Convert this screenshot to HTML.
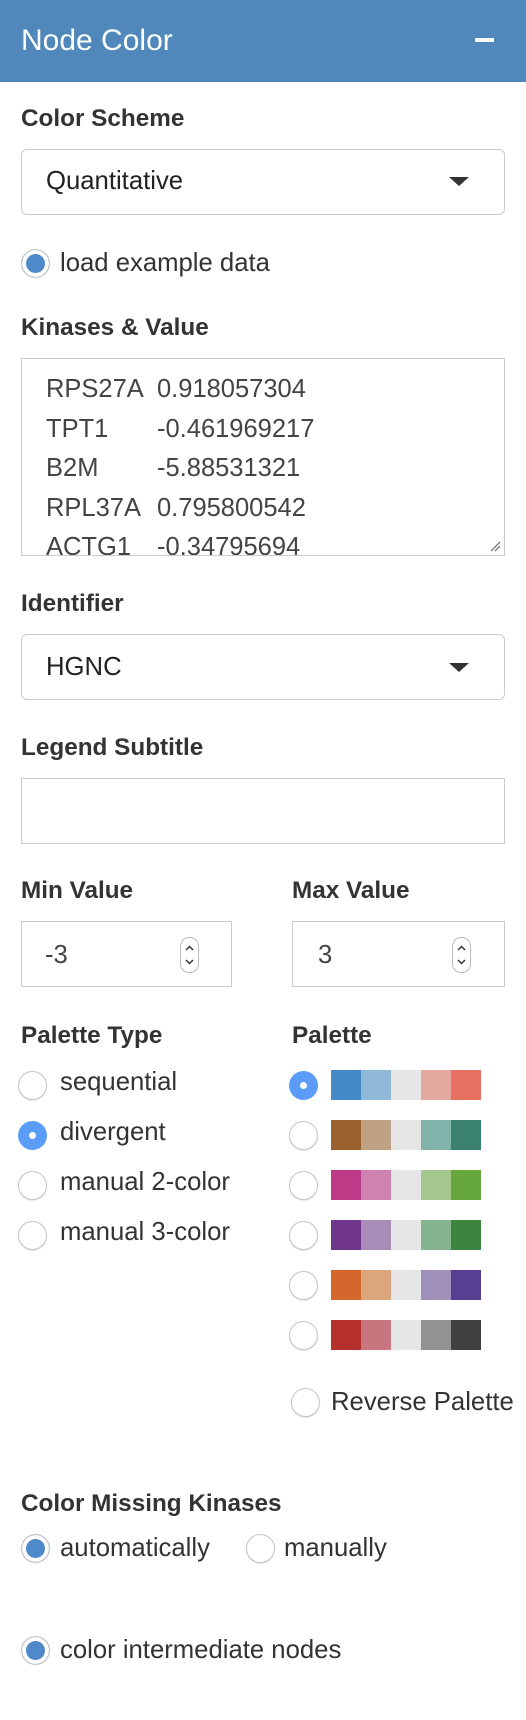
<!DOCTYPE html>
<html><head><meta charset="utf-8"><style>
*{box-sizing:border-box;margin:0;padding:0}
body{width:526px;height:1720px;background:#fff;font-family:"Liberation Sans",sans-serif;color:#333;position:relative;overflow:hidden}
.a{position:absolute;white-space:nowrap}
.hdr{position:absolute;left:0;top:0;width:526px;height:82px;background:#5088bb}
.lbl{position:absolute;font-weight:bold;font-size:24.3px;color:#333;line-height:30px;height:30px;white-space:nowrap}
.t{position:absolute;font-size:25.7px;color:#333;line-height:30px;height:30px;white-space:nowrap}
.box{position:absolute;border:1.5px solid #ccc;background:#fff}
.sel{border-radius:6px}
.arrow{position:absolute;width:0;height:0;border-left:10px solid transparent;border-right:10px solid transparent;border-top:9px solid #333}
.r{position:absolute;width:29px;height:29px;border-radius:50%;border:1.5px solid #c4c4c4;background:#fff;box-shadow:0 1px 1px rgba(0,0,0,.1)}
.rc{background:#5089c9;box-shadow:inset 0 0 0 4px #fff;border:1.5px solid #c4c4c4}
.rb{background:#5a9cf8;border:none;box-shadow:none}
.rb::after{content:"";position:absolute;left:11px;top:11px;width:7px;height:7px;border-radius:50%;background:#fff}
.sw{position:absolute;height:30px;width:150px;display:flex}
.sw span{flex:1}
.spin{position:absolute;width:19px;height:36px;border:1px solid #bbb;border-radius:9px;background:#fff}
</style></head><body>
<div class="hdr"></div>
<div class="a" style="left:21px;top:24px;font-size:30px;color:#fff;line-height:34px">Node Color</div>
<div class="a" style="left:475px;top:38px;width:19px;height:4px;background:#fff"></div>

<div class="lbl" style="left:21px;top:104px">Color Scheme</div>
<div class="box sel" style="left:21px;top:149px;width:484px;height:66px"></div>
<div class="t" style="left:46px;top:166px;color:#222">Quantitative</div>
<div class="arrow" style="left:449px;top:177px"></div>

<div class="r rc" style="left:21px;top:249px"></div>
<div class="t" style="left:60px;top:248px">load example data</div>

<div class="lbl" style="left:21px;top:313px">Kinases &amp; Value</div>
<div class="box" style="left:21px;top:358px;width:484px;height:198px;overflow:hidden">
<div style="position:absolute;left:24px;top:11px;font-size:25.5px;line-height:39.5px;color:#444;white-space:pre">RPS27A
TPT1
B2M
RPL37A
ACTG1</div>
<div style="position:absolute;left:135px;top:11px;font-size:25.5px;line-height:39.5px;color:#444;white-space:pre">0.918057304
-0.461969217
-5.88531321
0.795800542
-0.34795694</div>
<svg style="position:absolute;right:3px;bottom:3px" width="12" height="12"><path d="M2 11L11 2M6 11L11 6" stroke="#666" stroke-width="1.2"/></svg>
</div>

<div class="lbl" style="left:21px;top:589px">Identifier</div>
<div class="box sel" style="left:21px;top:634px;width:484px;height:66px"></div>
<div class="t" style="left:46px;top:652px;color:#222">HGNC</div>
<div class="arrow" style="left:449px;top:663px"></div>

<div class="lbl" style="left:21px;top:733px">Legend Subtitle</div>
<div class="box" style="left:21px;top:778px;width:484px;height:66px"></div>

<div class="lbl" style="left:21px;top:876px">Min Value</div>
<div class="lbl" style="left:292px;top:876px">Max Value</div>
<div class="box" style="left:21px;top:921px;width:211px;height:66px"></div>
<div class="box" style="left:292px;top:921px;width:213px;height:66px"></div>
<div class="t" style="left:45px;top:940px;color:#444">-3</div>
<div class="t" style="left:318px;top:940px;color:#444">3</div>
<div class="spin" style="left:180px;top:937px"></div>
<div class="spin" style="left:452px;top:937px"></div>
<svg class="a" style="left:180px;top:937px" width="19" height="36"><path d="M6 13L9.5 9.5L13 13M6 23L9.5 26.5L13 23" stroke="#333" stroke-width="1.5" fill="none"/></svg>
<svg class="a" style="left:452px;top:937px" width="19" height="36"><path d="M6 13L9.5 9.5L13 13M6 23L9.5 26.5L13 23" stroke="#333" stroke-width="1.5" fill="none"/></svg>

<div class="lbl" style="left:21px;top:1021px">Palette Type</div>
<div class="lbl" style="left:292px;top:1021px">Palette</div>

<div class="r" style="left:18px;top:1071px"></div><div class="t" style="left:60px;top:1067px">sequential</div>
<div class="r rb" style="left:18px;top:1121px"></div><div class="t" style="left:60px;top:1117px">divergent</div>
<div class="r" style="left:18px;top:1171px"></div><div class="t" style="left:60px;top:1167px">manual 2-color</div>
<div class="r" style="left:18px;top:1221px"></div><div class="t" style="left:60px;top:1217px">manual 3-color</div>

<div class="r rb" style="left:289px;top:1071px"></div>
<div class="r" style="left:289px;top:1121px"></div>
<div class="r" style="left:289px;top:1171px"></div>
<div class="r" style="left:289px;top:1221px"></div>
<div class="r" style="left:289px;top:1271px"></div>
<div class="r" style="left:289px;top:1321px"></div>

<div class="sw" style="left:331px;top:1070px"><span style="background:#4589c8"></span><span style="background:#8fb8d9"></span><span style="background:#e6e6e6"></span><span style="background:#e3a89f"></span><span style="background:#e77060"></span></div>
<div class="sw" style="left:331px;top:1120px"><span style="background:#9a612d"></span><span style="background:#bfa283"></span><span style="background:#e6e6e6"></span><span style="background:#82b3aa"></span><span style="background:#3a8170"></span></div>
<div class="sw" style="left:331px;top:1170px"><span style="background:#bd3a87"></span><span style="background:#cf81b2"></span><span style="background:#e6e6e6"></span><span style="background:#a3c78d"></span><span style="background:#66a83b"></span></div>
<div class="sw" style="left:331px;top:1220px"><span style="background:#6f368b"></span><span style="background:#a98bb8"></span><span style="background:#e6e6e6"></span><span style="background:#84b58f"></span><span style="background:#3c8540"></span></div>
<div class="sw" style="left:331px;top:1270px"><span style="background:#d6672c"></span><span style="background:#dca67c"></span><span style="background:#e6e6e6"></span><span style="background:#9f90b9"></span><span style="background:#583f91"></span></div>
<div class="sw" style="left:331px;top:1320px"><span style="background:#b5302d"></span><span style="background:#c97580"></span><span style="background:#e6e6e6"></span><span style="background:#929292"></span><span style="background:#404040"></span></div>

<div class="r" style="left:291px;top:1388px"></div><div class="t" style="left:331px;top:1387px">Reverse Palette</div>

<div class="lbl" style="left:21px;top:1489px">Color Missing Kinases</div>
<div class="r rc" style="left:21px;top:1534px"></div><div class="t" style="left:60px;top:1533px">automatically</div>
<div class="r" style="left:246px;top:1534px"></div><div class="t" style="left:284px;top:1533px">manually</div>

<div class="r rc" style="left:21px;top:1636px"></div><div class="t" style="left:60px;top:1635px">color intermediate nodes</div>
</body></html>
